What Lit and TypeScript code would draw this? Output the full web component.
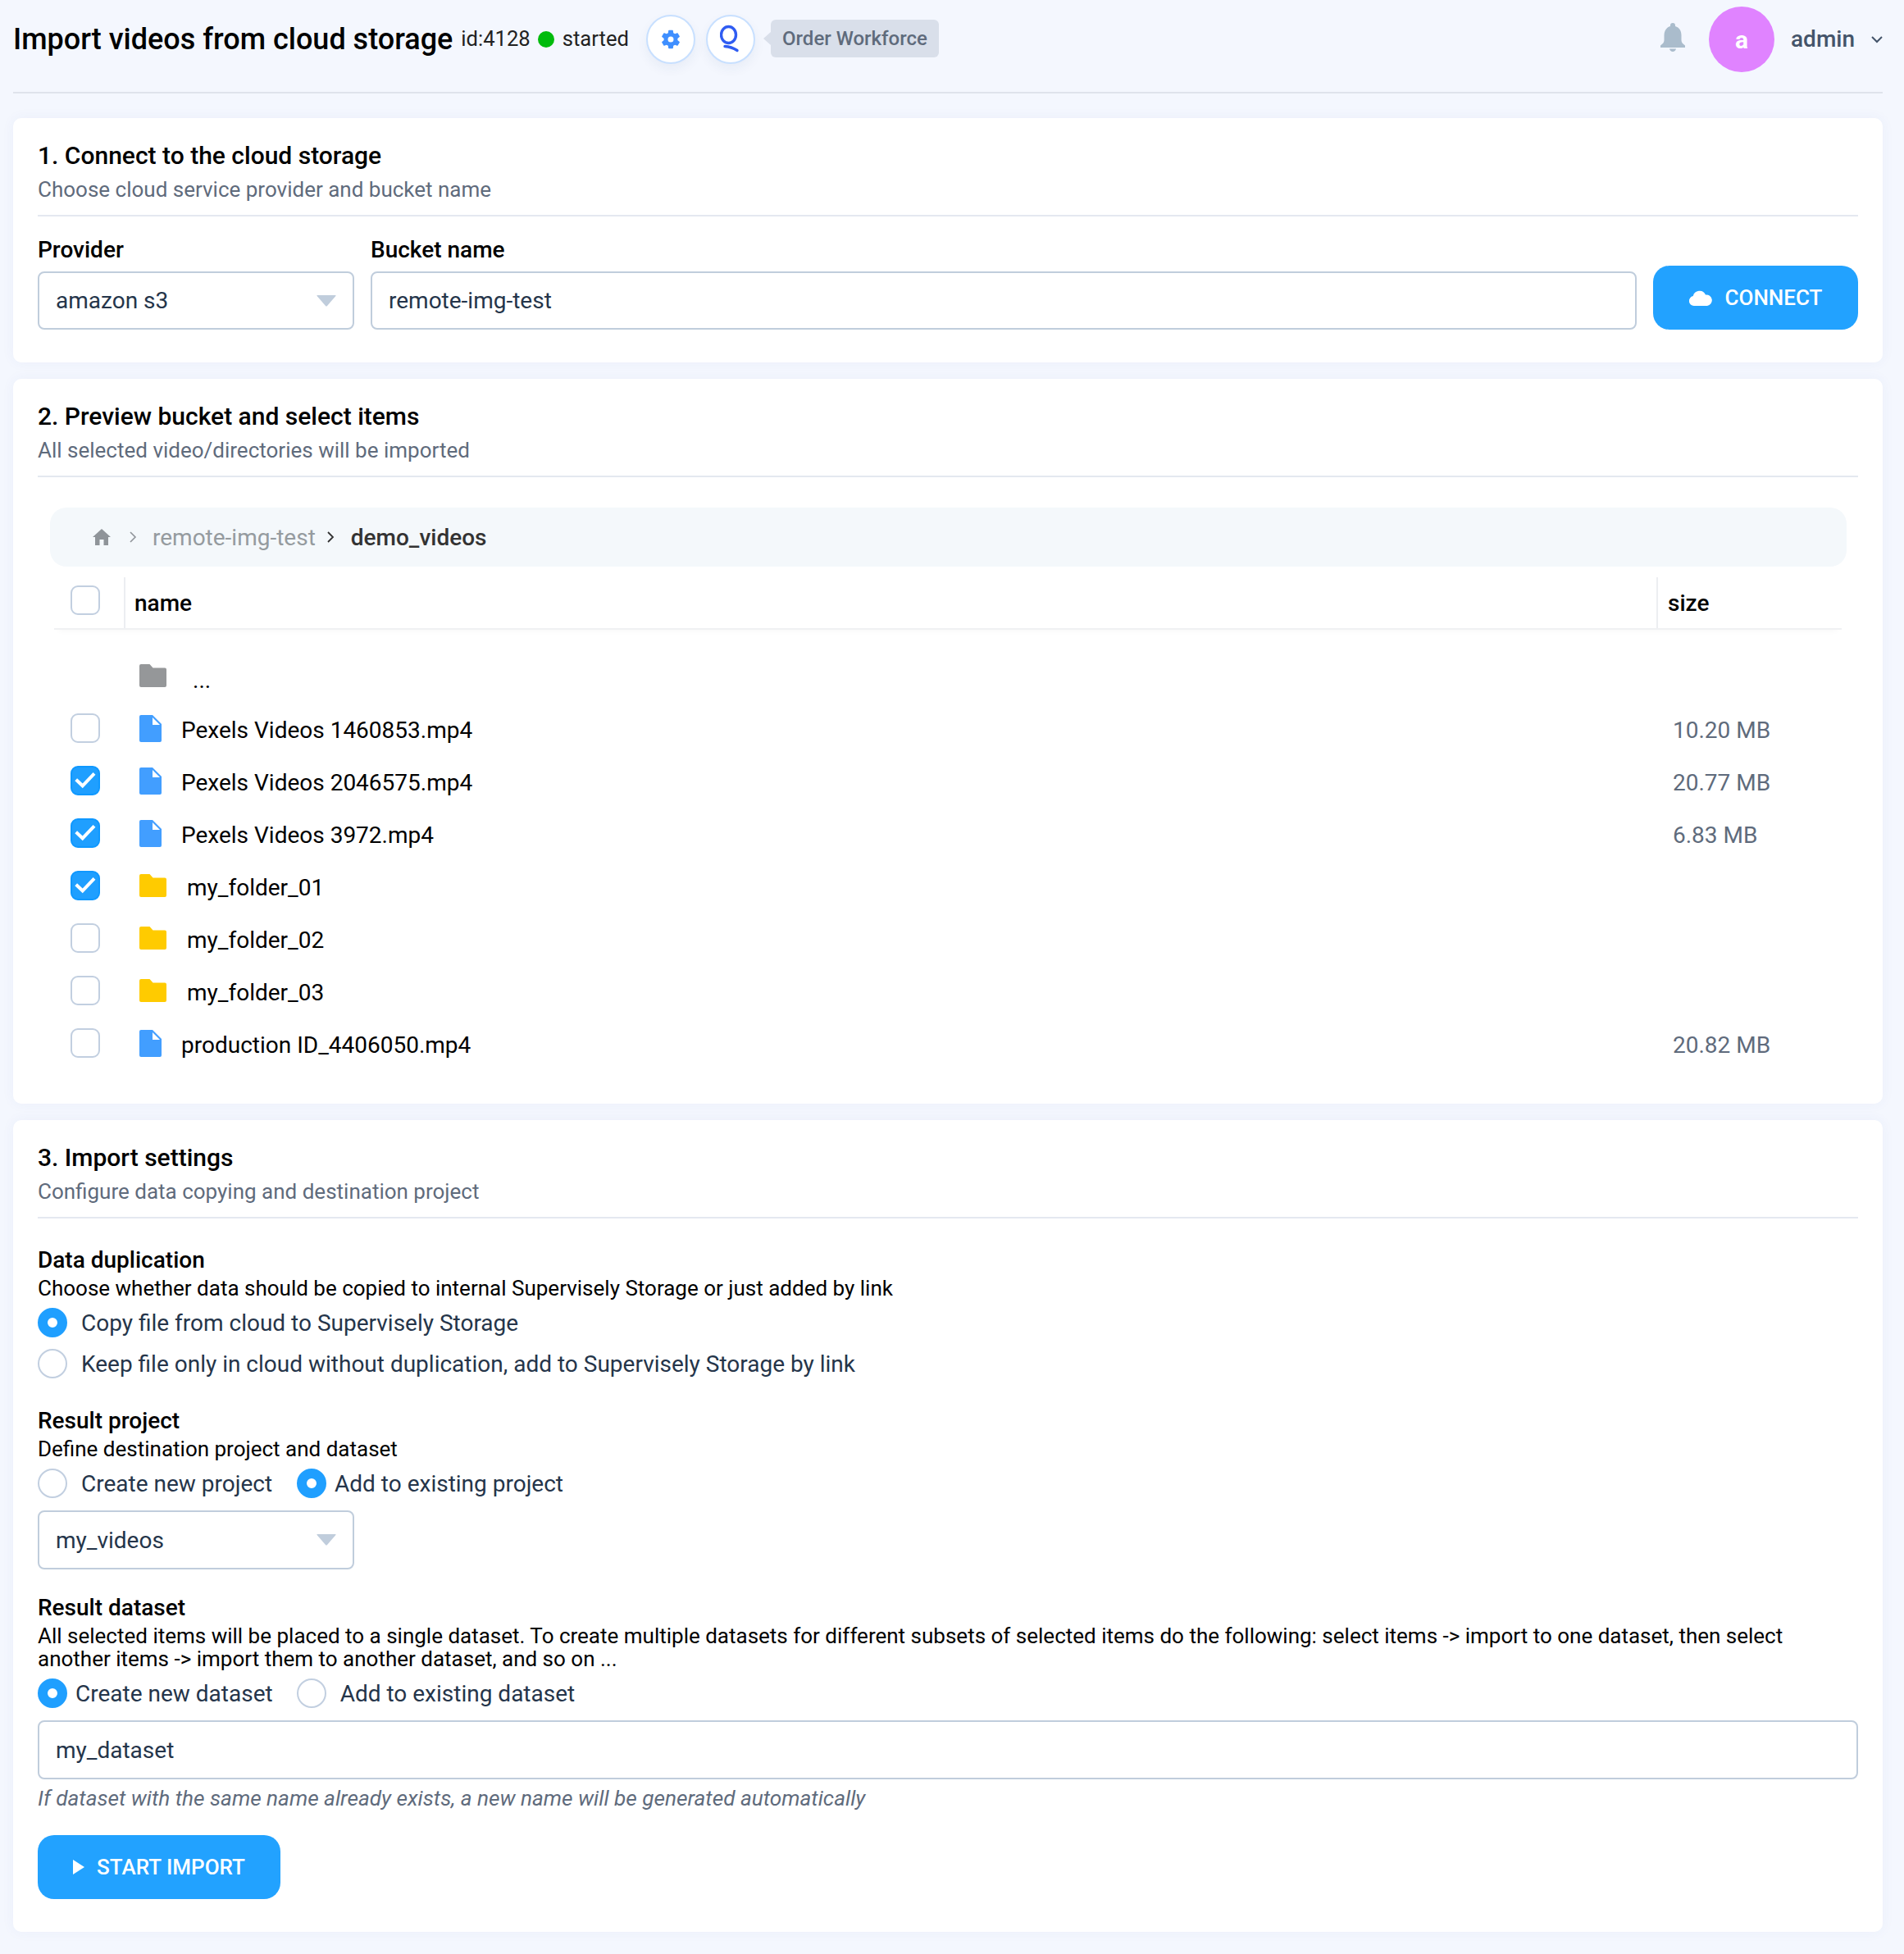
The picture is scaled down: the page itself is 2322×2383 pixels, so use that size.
import { LitElement, html, css, svg } from "lit";
import { customElement } from "lit/decorators.js";

const folderIcon = (color: string) => html`<svg class="folder" viewBox="0 0 33 28"><path fill=${color} d="M2 0h10.500l4 4.500H31a2 2 0 0 1 2 2V26a2 2 0 0 1-2 2H2a2 2 0 0 1-2-2V2a2 2 0 0 1 2-2z"/></svg>`;
const fileIcon = html`<svg class="file" viewBox="0 0 27 33"><path fill="#429eff" d="M2 0h14l11 11v20a2 2 0 0 1-2 2H2a2 2 0 0 1-2-2V2a2 2 0 0 1 2-2z"/><path fill="#fff" d="M16 3 25 12h-9z"/></svg>`;
const caret = html`<svg class="caret" viewBox="0 0 24 14"><path fill="#c0cddc" d="M1 0h22q1 0 .4 1L13 13q-1 1-2 0L.6 1Q0 0 1 0z"/></svg>`;
const check = svg`<path d="M4.700 14.700l8 7.600 14.300-15" fill="none" stroke="#fff" stroke-width="4"/>`;

type Row = { kind: "file" | "folder"; name: string; size?: string; checked?: boolean };

const rows: Row[] = [
  { kind: "file", name: "Pexels Videos 1460853.mp4", size: "10.20 MB" },
  { kind: "file", name: "Pexels Videos 2046575.mp4", size: "20.77 MB", checked: true },
  { kind: "file", name: "Pexels Videos 3972.mp4", size: "6.83 MB", checked: true },
  { kind: "folder", name: "my_folder_01", checked: true },
  { kind: "folder", name: "my_folder_02" },
  { kind: "folder", name: "my_folder_03" },
  { kind: "file", name: "production ID_4406050.mp4", size: "20.82 MB" },
];

@customElement("app-root")
export class AppRoot extends LitElement {
  static styles = css`
    :host {
      display: block;
      min-height: 2383px;
      padding: 0 26px 27px 16px;
      box-sizing: border-box;
      background: #f4f7fe;
      font-family: Roboto, sans-serif;
      font-size: 28px;
      color: #000;
    }

    .header {
      height: 112px;
      border-bottom: 2px solid #dfe3ec;
      display: flex;
      align-items: flex-start;
      margin-bottom: 30px;
    }

    .title {
      font-size: 36px;
      font-weight: 500;
      line-height: 42px;
      margin-top: 27px;
    }

    .app-id {
      font-size: 25.6px;
      line-height: 42px;
      margin: 26px 0 0 10px;
      color: #222;
    }

    .dot {
      width: 20px;
      height: 20px;
      border-radius: 50%;
      background: #00bb0c;
      margin: 38px 0 0 9px;
    }

    .status {
      font-size: 25.6px;
      line-height: 42px;
      margin: 26px 0 0 10px;
      color: #222;
    }

    .round {
      width: 60px;
      height: 60px;
      box-sizing: border-box;
      border-radius: 50%;
      border: 2px solid #c8e0ff;
      background: #fff;
      box-shadow: 0 6px 14px rgba(30, 60, 120, 0.06);
      margin-top: 18px;
      display: flex;
      align-items: center;
      justify-content: center;
    }

    .gear {
      margin-left: 21px;
    }

    .logo {
      margin-left: 13px;
    }

    .tag {
      position: relative;
      margin: 24px 0 0 19px;
      height: 46px;
      width: 205px;
      box-sizing: border-box;
      background: #d9dfea;
      border-radius: 6px;
      color: #5f6b7c;
      font-size: 24px;
      font-weight: 500;
      line-height: 46px;
      text-align: center;
    }

    .tag::before {
      content: "";
      position: absolute;
      left: -9px;
      top: 15px;
      border: 8px solid transparent;
      border-left: 0;
      border-right: 9px solid #d9dfea;
    }

    .spacer {
      flex: 1;
    }

    .bell {
      width: 30px;
      height: 35px;
      margin-top: 28px;
    }

    .avatar {
      width: 80px;
      height: 80px;
      border-radius: 50%;
      background: #e083ff;
      color: #fff;
      font-size: 30px;
      font-weight: 700;
      margin: 8px 0 0 29px;
      display: flex;
      align-items: center;
      justify-content: center;
    }

    .user {
      font-weight: 500;
      color: #44546a;
      line-height: 42px;
      margin: 27px 0 0 20px;
    }

    .chevron {
      width: 14px;
      height: 9px;
      margin: 44px 0 0 20px;
    }

    .card {
      background: #fff;
      border-radius: 10px;
      padding: 26px 30px 0;
      margin-bottom: 20px;
      box-sizing: border-box;
      box-shadow: 0 0 16px rgba(50, 80, 170, 0.05);
    }

    .card:last-child {
      margin-bottom: 0;
    }

    .one {
      height: 298px;
    }

    .two {
      height: 884px;
    }

    .three {
      height: 990px;
    }

    h2 {
      margin: 0;
      font-size: 30px;
      font-weight: 500;
      line-height: 40px;
    }

    .sub {
      color: #5f6b7c;
      font-size: 26px;
      line-height: 36px;
      margin-top: 3px;
    }

    .rule {
      height: 2px;
      background: #e4e8f0;
      margin-top: 13px;
    }

    .connect-row {
      display: flex;
      align-items: flex-end;
      gap: 20px;
      margin-top: 20px;
    }

    .field-label {
      font-weight: 500;
      line-height: 40px;
      margin-bottom: 6px;
      padding-top: 1px;
    }

    .control {
      height: 71px;
      box-sizing: border-box;
      border: 2px solid #c0cddc;
      border-radius: 8px;
      padding: 0 20px;
      color: #25354a;
      display: flex;
      align-items: center;
      justify-content: space-between;
      background: #fff;
    }

    .select {
      width: 386px;
    }

    .grow {
      flex: 1;
    }

    .caret {
      width: 24px;
      height: 14px;
    }

    .btn {
      height: 78px;
      box-sizing: border-box;
      border-radius: 20px;
      background: #22a2ff;
      color: #fff;
      font-weight: 500;
      font-size: 26px;
      display: flex;
      align-items: center;
      justify-content: center;
    }

    .btn-connect {
      width: 250px;
      gap: 16px;
    }

    .btn-start {
      width: 296px;
      gap: 15px;
      margin-top: 27px;
    }

    .crumbs {
      height: 72px;
      margin: 37px 14px 0 15px;
      background: #f4f8fb;
      border-radius: 20px;
      padding-left: 52px;
      display: flex;
      align-items: center;
      color: #959b9f;
    }

    .crumbs .current {
      color: #333;
      font-weight: 500;
    }

    .crumbs span {
      padding-top: 1px;
    }

    .crumb-home {
      width: 22px;
      height: 20px;
    }

    .crumb-sep {
      width: 9px;
      height: 14px;
      margin: 0 19px 0 23px;
    }

    .crumb-sep.dark {
      margin: 0 20px 0 14px;
    }

    .table {
      margin: 13px 20px 0;
    }

    .thead {
      display: grid;
      grid-template-columns: 85px 1fr 226px;
      height: 62px;
      border-bottom: 2px solid #f0f1f3;
      box-shadow: 0 6px 8px -6px rgba(0, 0, 0, 0.05);
      font-weight: 500;
    }

    .thead > div {
      display: flex;
      align-items: center;
    }

    .th-name {
      border-left: 2px solid #eceef1;
      padding-left: 11px;
    }

    .th-size {
      border-left: 2px solid #eceef1;
      padding-left: 12px;
    }

    .th-check {
      padding: 0 0 6px 20px;
    }

    .tbody {
      margin-top: 24px;
    }

    .row {
      display: grid;
      grid-template-columns: 104px 1fr 206px;
      height: 64px;
      align-items: center;
    }

    .row .size {
      color: #5f6b7c;
      padding-top: 5px;
    }

    .cell-name {
      display: flex;
      align-items: center;
    }

    .row-text {
      padding-top: 5px;
    }

    .box {
      display: block;
      width: 36px;
      height: 36px;
      margin-left: 20px;
      box-sizing: border-box;
      border: 2px solid #c2cfe0;
      border-radius: 9px;
      background: #fff;
    }

    .th-check .box {
      margin-left: 0;
    }

    .box.on {
      background: #1f9fff;
      border-color: #0f98ff;
    }

    .box svg {
      display: block;
      width: 32px;
      height: 32px;
    }

    .folder {
      width: 33px;
      height: 28px;
      margin-right: 25px;
    }

    .file {
      width: 27px;
      height: 33px;
      margin-right: 24px;
    }

    .dots {
      margin-top: 11px;
      margin-left: 7px;
    }

    h3 {
      margin: 0 0 -1px;
      padding-top: 1px;
      font-size: 28px;
      font-weight: 500;
      line-height: 36px;
    }

    .section {
      margin-top: 32px;
    }

    .section.gap-lg {
      margin-top: 33px;
    }

    .section.gap-sm {
      margin-top: 28px;
    }

    .desc {
      font-size: 26px;
      line-height: 28px;
      margin-top: 3px;
    }

    .radios {
      display: flex;
      align-items: center;
      height: 36px;
      color: #25354a;
      margin-top: 10px;
    }

    .radios.second {
      margin-top: 14px;
    }

    .radio {
      width: 36px;
      height: 36px;
      box-sizing: border-box;
      border: 2px solid #c2cfe0;
      border-radius: 50%;
      background: #fff;
      flex: none;
      margin-right: 17px;
    }

    .radio.on {
      border: 12px solid #1f9fff;
    }

    .radio.tight {
      margin-right: 10px;
    }

    .radio.wide {
      margin-right: 17px;
    }

    .opt {
      margin-right: 30px;
    }

    .opt.ds {
      margin-right: 29px;
    }

    .below {
      height: 72px;
      margin-top: 15px;
    }

    .hint {
      font-style: italic;
      color: #5f6b7c;
      font-size: 26.2px;
      line-height: 36px;
      margin-top: 5px;
    }
  `;

  private renderRow(r: Row) {
    return html`<div class="row">
      <span class="box ${r.checked ? "on" : ""}">${r.checked ? html`<svg viewBox="0 0 32 32">${check}</svg>` : ""}</span>
      <div class="cell-name">
        ${r.kind === "file" ? fileIcon : folderIcon("#ffcb00")}
        <span class="row-text">${r.name}</span>
      </div>
      <div class="size">${r.size ?? ""}</div>
    </div>`;
  }

  render() {
    return html`
      <div class="header">
        <div class="title">Import videos from cloud storage</div>
        <div class="app-id">id:4128</div>
        <div class="dot"></div>
        <div class="status">started</div>
        <div class="round gear">
          <svg width="28" height="28" viewBox="0 0 24 24"><path fill="#3f8fff" fill-rule="evenodd" d="M19.140 12.940c.04-.3.06-.61.06-.94 0-.32-.02-.64-.07-.94l2.030-1.580c.18-.14.23-.41.12-.61l-1.920-3.320c-.12-.22-.37-.29-.59-.22l-2.390.96c-.5-.38-1.030-.7-1.620-.94l-.36-2.540c-.04-.24-.24-.41-.48-.41h-3.840c-.24 0-.43.17-.47.41l-.36 2.540c-.59.24-1.130.57-1.620.94l-2.390-.96c-.22-.08-.47 0-.59.22L2.740 8.870c-.12.21-.08.47.12.61l2.030 1.580c-.05.3-.09.63-.09.94s.02.64.07.94l-2.030 1.580c-.18.14-.23.41-.12.61l1.920 3.320c.12.22.37.29.59.22l2.390-.96c.5.38 1.030.7 1.620.94l.36 2.540c.05.24.24.41.48.41h3.840c.24 0 .44-.17.47-.41l.36-2.540c.59-.24 1.130-.56 1.620-.94l2.390.96c.22.08.47 0 .59-.22l1.920-3.320c.12-.22.07-.47-.12-.61l-2.010-1.580zM12 15a3 3 0 1 1 0-6 3 3 0 0 1 0 6z"/></svg>
        </div>
        <div class="round logo">
          <svg width="26" height="36" viewBox="0 0 26 36"><g fill="none" stroke="#2f5cf2" stroke-width="3.400"><ellipse cx="10.500" cy="12.500" rx="9" ry="10"/><path d="M6 26.500q8 .5 15 5" stroke-linecap="round"/></g></svg>
        </div>
        <div class="tag">Order Workforce</div>
        <div class="spacer"></div>
        <svg class="bell" viewBox="0 0 30 35"><path fill="#aabccc" d="M15 0a3 3 0 0 1 3 3v1c5 1.500 7.500 5.500 7.500 11v6c0 3 2 4.500 4.500 6.500V30H0v-2.500C2.500 25.500 4.500 24 4.500 21v-6c0-5.500 2.500-9.500 7.500-11V3a3 3 0 0 1 3-3zM11 31.500h8c-.5 2-2 3.500-4 3.500s-3.500-1.500-4-3.500z"/></svg>
        <div class="avatar">a</div>
        <div class="user">admin</div>
        <svg class="chevron" viewBox="0 0 14 9"><path d="M1 1l6 6 6-6" fill="none" stroke="#44546a" stroke-width="2"/></svg>
      </div>

      <div class="card one">
        <h2>1. Connect to the cloud storage</h2>
        <div class="sub">Choose cloud service provider and bucket name</div>
        <div class="rule"></div>
        <div class="connect-row">
          <div>
            <div class="field-label">Provider</div>
            <div class="control select"><span>amazon s3</span>${caret}</div>
          </div>
          <div class="grow">
            <div class="field-label">Bucket name</div>
            <div class="control">remote-img-test</div>
          </div>
          <div class="btn btn-connect">
            <svg width="28" height="19" viewBox="0 0 28 19"><path fill="#fff" d="M6 19a6 6 0 0 1-1.200-11.900A8 8 0 0 1 20 5.500 6.800 6.800 0 0 1 22 19z"/></svg>
            <span>CONNECT</span>
          </div>
        </div>
      </div>

      <div class="card two">
        <h2>2. Preview bucket and select items</h2>
        <div class="sub">All selected video/directories will be imported</div>
        <div class="rule"></div>
        <div class="crumbs">
          <svg class="crumb-home" viewBox="0 0 22 20"><path fill="#8f9499" d="M11 0l11 10h-3v10h-5.500v-7h-5v7H3V10H0z"/></svg>
          <svg class="crumb-sep" viewBox="0 0 9 14"><path d="M1 1l6 6-6 6" fill="none" stroke="#8f9499" stroke-width="1.600"/></svg>
          <span>remote-img-test</span>
          <svg class="crumb-sep dark" viewBox="0 0 9 14"><path d="M1 1l6 6-6 6" fill="none" stroke="#333" stroke-width="1.800"/></svg>
          <span class="current">demo_videos</span>
        </div>
        <div class="table">
          <div class="thead">
            <div class="th-check"><span class="box"></span></div>
            <div class="th-name">name</div>
            <div class="th-size">size</div>
          </div>
          <div class="tbody">
            <div class="row">
              <span></span>
              <div class="cell-name">${folderIcon("#959799")}<span class="dots">...</span></div>
              <div></div>
            </div>
            ${rows.map((r) => this.renderRow(r))}
          </div>
        </div>
      </div>

      <div class="card three">
        <h2>3. Import settings</h2>
        <div class="sub">Configure data copying and destination project</div>
        <div class="rule"></div>

        <div class="section">
          <h3>Data duplication</h3>
          <div class="desc">Choose whether data should be copied to internal Supervisely Storage or just added by link</div>
          <div class="radios"><span class="radio on"></span>Copy file from cloud to Supervisely Storage</div>
          <div class="radios second"><span class="radio"></span>Keep file only in cloud without duplication, add to Supervisely Storage by link</div>
        </div>

        <div class="section gap-lg">
          <h3>Result project</h3>
          <div class="desc">Define destination project and dataset</div>
          <div class="radios">
            <span class="radio"></span><span class="opt">Create new project</span>
            <span class="radio on tight"></span><span>Add to existing project</span>
          </div>
          <div class="control select below"><span>my_videos</span>${caret}</div>
        </div>

        <div class="section gap-sm">
          <h3>Result dataset</h3>
          <div class="desc">All selected items will be placed to a single dataset. To create multiple datasets for different subsets of selected items do the following: select items -> import to one dataset, then select another items -> import them to another dataset, and so on ...</div>
          <div class="radios">
            <span class="radio on tight"></span><span class="opt ds">Create new dataset</span>
            <span class="radio wide"></span><span>Add to existing dataset</span>
          </div>
          <div class="control below">my_dataset</div>
          <div class="hint">If dataset with the same name already exists, a new name will be generated automatically</div>
          <div class="btn btn-start">
            <svg width="14" height="18" viewBox="0 0 14 18"><path fill="#fff" d="M0 0l14 9-14 9z"/></svg>
            <span>START IMPORT</span>
          </div>
        </div>
      </div>
    `;
  }
}
